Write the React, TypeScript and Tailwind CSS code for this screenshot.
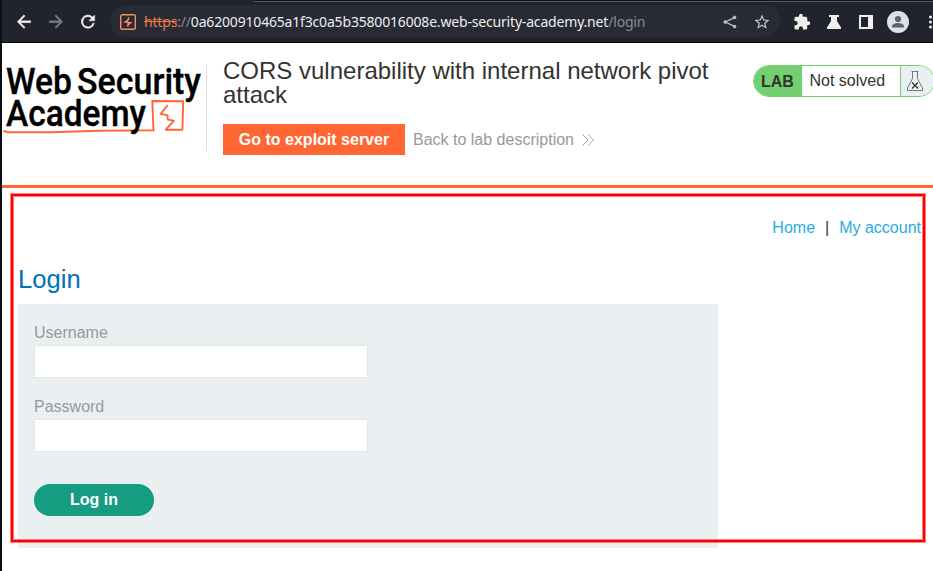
import { ReactNode } from "react";

function BrowserBar() {
  return (
    <header className="h-[43px] shrink-0 bg-[#22242d] border-b border-black flex flex-col font-['Noto_Sans',sans-serif]">
      <div className="h-[2px] shrink-0 flex">
        <div className="w-[251px] bg-[#22242d]" />
        <div className="flex-1 bg-[#101219] border-b border-[#5b5c63] rounded-bl-sm" />
      </div>
      <div className="h-10 pt-[3px] flex items-start">
        <div className="h-8 w-[108px] shrink-0 flex items-center pl-3 gap-3">
          <svg className="w-5 h-5" viewBox="0 -.8 24 24" fill="#f2f1ee"><path d="M20 10.8H7.8l5.6-5.6L12 3.8 3.8 12l8.2 8.2 1.4-1.4-5.6-5.6H20z" stroke="#f2f1ee" strokeWidth=".4" /></svg>
          <svg className="w-5 h-5" viewBox="0 -.8 24 24" fill="#7b7c80"><path d="M12 3.8l-1.4 1.4 5.6 5.6H4v2.4h12.2l-5.6 5.6 1.4 1.4 8.2-8.2z" stroke="#7b7c80" strokeWidth=".4" /></svg>
          <svg className="w-5 h-5" viewBox="0 -.8 24 24" fill="#f2f1ee"><path d="M17.65 6.35A8 8 0 1 0 19.73 14h-2.08A6 6 0 1 1 12 6c1.66 0 3.14.69 4.22 1.78L13 11h7V4z" stroke="#f2f1ee" strokeWidth=".5" /></svg>
        </div>
        <div className="h-8 w-[670px] shrink-0 rounded-full bg-[#282a35] flex items-center pt-[2px] pl-[10px] pr-[10px]">
          <svg className="w-4 h-4 shrink-0" viewBox="0 0 16 16" fill="none" stroke="#ff8a5e"><rect x=".7" y=".7" width="14.6" height="14.6" rx="1.5" strokeWidth="1.4" /><path d="M8.6 3.2v2L5.300 8h2.400v.8h2.800L7.900 10.800v2" strokeWidth="1.5" /></svg>
          <div className="ml-2 text-[14px] leading-5 whitespace-nowrap text-[#8c8d92] tracking-[-0.18px]">
            <span className="text-[#e9774b] line-through">https</span>://<span className="text-[#eeeeec]">0a6200910465a1f3c0a5b3580016008e.web-security-academy.net</span>/login
          </div>
          <div className="ml-auto flex gap-4 shrink-0">
            <svg className="w-4 h-4" viewBox="0 0 16 16" fill="#c3c3c4" stroke="#c3c3c4"><path d="M12.6 3.6L3.2 8l9.4 4.4" fill="none" strokeWidth="1.3" /><circle cx="12.6" cy="3.4" r="1.3" /><circle cx="3.2" cy="8" r="1.3" /><circle cx="12.6" cy="12.6" r="1.3" /></svg>
            <svg className="w-4 h-4" viewBox="1.5 1.5 21 21" fill="#c3c3c4"><path d="M22 9.24l-7.19-.62L12 2 9.19 8.63 2 9.24l5.46 4.73L5.82 21 12 17.27 18.18 21l-1.63-7.03L22 9.24zM12 15.4l-3.76 2.27 1-4.28-3.32-2.88 4.38-.38L12 6.1l1.71 4.04 4.38.38-3.32 2.88 1 4.28L12 15.4z" /></svg>
          </div>
        </div>
        <div className="h-8 flex-1 min-w-0 flex items-center pt-[2px] pl-[13px] overflow-hidden">
          <svg className="w-[18px] h-[18px] shrink-0" viewBox="0 0 24 24" fill="#f0efeb"><path d="M20.5 11H19V7a2 2 0 0 0-2-2h-4V3.5a2.5 2.5 0 0 0-5 0V5H4a2 2 0 0 0-2 2v3.8h1.5a2.7 2.7 0 0 1 0 5.4H2V20a2 2 0 0 0 2 2h3.8v-1.5a2.7 2.7 0 0 1 5.4 0V22H17a2 2 0 0 0 2-2v-4h1.5a2.5 2.5 0 0 0 0-5z" /></svg>
          <svg className="w-4 h-4 ml-[15px] shrink-0" viewBox="0 0 16 16" fill="#f0efeb"><path d="M3 1h10v2h-2v4l4 6.5V15H1v-1.500L5 7V3H3z" /></svg>
          <svg className="w-4 h-4 ml-4 shrink-0" viewBox="0 0 16 16" fill="#f0efeb"><path fillRule="evenodd" d="M1 1h14v14H1zM3 3v10h7V3z" /></svg>
          <svg className="w-[22px] h-[22px] ml-[13px] shrink-0" viewBox="0 0 22 22"><circle cx="11" cy="11" r="11" fill="#dee1e6" /><circle cx="11" cy="8" r="3.1" fill="#5a6475" /><path d="M5 16.4v-1.3c0-2.2 3.9-3.2 6-3.2s6 1 6 3.2v1.3z" fill="#5a6475" /></svg>
          <svg className="w-4 h-4 ml-[14px] shrink-0" viewBox="0 0 16 16" fill="#f0efeb"><circle cx="7.500" cy="3" r="1.5" /><circle cx="7.500" cy="8" r="1.5" /><circle cx="7.500" cy="13" r="1.5" /></svg>
        </div>
      </div>
    </header>
  );
}

function Logo() {
  return (
    <svg className="w-[204px] h-[86px] shrink-0 overflow-visible" viewBox="2 65 204 86" fontFamily="Roboto, sans-serif" fontWeight="500">
      <path d="M3.500 131L8 132.200l42 .1 50-1.500 53.500-.6L152.300 101l30.900.3-.8 28.500-16.600-.1 8-9.100-6-1-.4-4.500-6.700-1.100 7-9" fill="none" stroke="#ff6633" strokeWidth="1.9" strokeLinejoin="round" />
      <g stroke="#000" strokeWidth=".35">
        <text x="6" y="93.500" fontSize="37" textLength="66" lengthAdjust="spacingAndGlyphs">Web</text>
        <text x="77" y="93.500" fontSize="37" textLength="124" lengthAdjust="spacingAndGlyphs">Security</text>
        <text x="6" y="126" fontSize="36" textLength="140" lengthAdjust="spacingAndGlyphs">Academy</text>
      </g>
    </svg>
  );
}

function LabStatus() {
  return (
    <div className="mt-[22px] ml-auto mr-[-2px] w-[182px] h-8 rounded-full border border-[#72d16e] overflow-hidden flex items-center leading-[30px] text-[16px] text-[#333332] shrink-0">
      <div className="w-12 h-full bg-[#72d16e] pl-[7px] pt-px font-bold">LAB</div>
      <div className="w-[98px] h-full pl-[7.500px] whitespace-nowrap">Not solved</div>
      <div className="flex-1 h-full border-l border-[#72d16e] bg-[#eaeff2] pl-[6px] pt-[5px]">
        <svg className="w-4 h-5" viewBox="0 0 16 20" fill="none" stroke="#777" strokeWidth="1"><path d="M4.5.5h7M5.5.5v7L.5 17v2.500h15V17l-5-9.500v-7" /><path d="M5 11.500l6 6M11 11.500l-6 6" stroke="#333" strokeWidth="1.3" /></svg>
      </div>
    </div>
  );
}

function Field({ label, type }: { label: ReactNode; type: string }) {
  return (
    <label className="block text-[16px] leading-[18px] text-[#999999]">
      <span className="block">{label}</span>
      <input type={type} className="block mt-[3px] w-[334px] h-[33px] px-2 bg-white border border-[#e5e6e6] outline-none" />
    </label>
  );
}

export default function App() {
  return (
    <div className="relative w-[933px] h-[571px] overflow-hidden bg-white border-l-2 border-[#0b0d17] flex flex-col font-['Liberation_Sans',Arial,sans-serif]">
      <BrowserBar />
      <section className="h-[145px] shrink-0 border-b-[3px] border-[#ff6633] flex items-start">
        <div className="mt-[22px] h-[86px] border-r border-[#dddddd]"><Logo /></div>
        <div className="ml-4 mt-4 w-[510px] shrink-0">
          <h1 className="text-[24px] leading-6 text-[#333332]">CORS vulnerability with internal network pivot attack</h1>
          <div className="mt-[17px] flex h-[31px] items-center text-[16px]">
            <a className="h-[31px] w-[182px] bg-[#ff6633] text-white font-bold leading-[31px] text-center">Go to exploit server</a>
            <a className="ml-2 text-[#999999] flex items-center gap-2 whitespace-nowrap">Back to lab description
              <svg className="w-3 h-3" viewBox="0 0 12 12" fill="none" stroke="#999" strokeWidth=".9"><path d="M.5.5L6 6 .5 11.5M6 .5L11.5 6 6 11.5" /></svg>
            </a>
          </div>
        </div>
        <LabStatus />
      </section>
      <main className="pl-4 pr-3 flex flex-col">
        <nav className="mt-[31px] h-[18px] flex justify-end text-[16px] leading-[18px] text-[#29abe2]">
          <a>Home</a><span className="mx-[10px] text-[#333332]">|</span><a>My account</a>
        </nav>
        <h2 className="mt-[28px] text-[25.6px] leading-[28px] text-[#0071bc]">Login</h2>
        <form className="mt-[11px] w-[700px] h-[244px] bg-[#eaeff2] px-4 pt-[20px] flex flex-col items-start">
          <Field label="Username" type="text" />
          <div className="mt-[20px]"><Field label="Password" type="password" /></div>
          <button type="button" className="mt-8 w-[120px] h-8 rounded-full bg-[#169c80] text-white text-[16px] font-bold leading-8">Log in</button>
        </form>
      </main>
      <div className="absolute left-[9px] top-[194px] w-[914px] h-[348px] border-2 border-[#ff0000] shadow-[0_0_0_1px_rgba(255,0,0,0.5),inset_0_0_0_1px_rgba(255,0,0,0.5)] pointer-events-none" />
    </div>
  );
}
